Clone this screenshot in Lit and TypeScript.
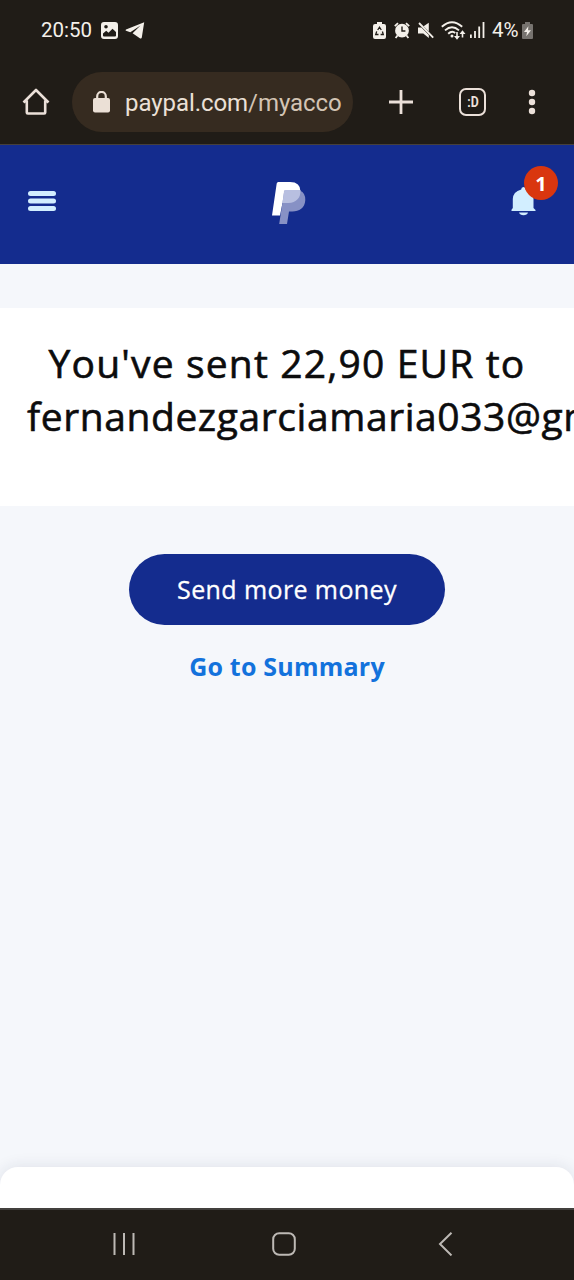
import { LitElement, html, css } from "lit";
import { customElement } from "lit/decorators.js";

@customElement("status-bar")
class StatusBar extends LitElement {
  static styles = css`
    :host { display: flex; align-items: center; height: 60px; box-sizing: border-box; padding: 0 41px 0 41px; font: 20.5px/24px Roboto, sans-serif; color: #f4f0ea; fill: #f4f0ea; }
    svg { display: block; flex: none; }
    .time { width: 60px; white-space: nowrap; }
    .image { margin-right: 7px; }
    .right { display: flex; align-items: center; margin-left: auto; }
    .recycle { margin-right: 8px; }
    .alarm { margin-right: 8px; }
    .mute { margin-right: 7px; }
    .wifi { margin-right: 4px; }
    .signal { margin-right: 7px; }
    .level { width: 30px; white-space: nowrap; }
  `;
  render() {
    return html`
      <span class="time">20:50</span>
      <svg class="image" width="17" height="17" viewBox="0 0 17 17"><path fill-rule="evenodd" d="M3 0H14Q17 0 17 3V14Q17 17 14 17H3Q0 17 0 14V3Q0 0 3 0ZM5 3A1.8 1.8 0 1 0 5 6.6A1.8 1.8 0 1 0 5 3ZM2 13.5V11.5L5.2 8.8L7.5 10.8L11.5 6.8L15 10V13.5Q15 14.5 14 14.5H3Q2 14.5 2 13.5Z"/></svg>
      <svg width="20" height="17" viewBox="0 0 20 17"><path d="M19.2 .3L1 7.5Q0 8.2 1 8.8L5.3 10.2L15.5 3.6L7.6 11.2L15.2 16.4Q16.5 17 16.8 15.5Z"/></svg>
      <div class="right">
        <svg class="recycle" width="13" height="17" viewBox="0 0 13 17"><path d="M4 0H9V2H11Q13 2 13 4V15Q13 17 11 17H2Q0 17 0 15V4Q0 2 2 2H4Z"/><path d="M4.7 8L6.5 5.2L8.3 8M9.4 9.5L10.3 12.5H7.6M5.5 12.5H2.7L3.7 9.4" fill="none" stroke="#201c17" stroke-width="1.3"/></svg>
        <svg class="alarm" width="16" height="17" viewBox="0 0 16 17"><circle cx="8" cy="8.7" r="6.9"/><path d="M.8 4.2L4 1.2M12 1.2L15.2 4.2M3.5 13.5L1.6 16M12.5 13.5L14.4 16" stroke="#f4f0ea" stroke-width="1.8"/><path d="M8 4.5V9H11.4" fill="none" stroke="#201c17" stroke-width="1.4"/></svg>
        <svg class="mute" width="16" height="17" viewBox="0 0 16 17"><path d="M0 5.5H3.4L10.8 12.9V16L5.3 11.5H0ZM5.6 4.3L10.8 .8V9.6Z"/><path d="M1 1L15.2 15.6" stroke="#f4f0ea" stroke-width="1.8"/></svg>
        <svg class="wifi" width="25" height="19" viewBox="0 0 25 19"><g fill="none" stroke="#f4f0ea" stroke-width="1.9"><path d="M.8 5.8Q11 -3.2 21.2 5.8"/><path d="M4 9.4Q11 3.2 18 9.4"/><path d="M7.2 12.8Q11 9.2 14.2 12"/></g><circle cx="11" cy="15" r="1.5"/><path d="M15.2 11H16.8V15H19L16 18.8L13 15H15.2ZM20.7 16.5V13H18.5L21.5 9.3L24.5 13H22.3V16.5Z"/></svg>
        <svg class="signal" width="15" height="16" viewBox="0 0 15 16"><path d="M0 12.5H1.8V16H0ZM4.1 9H5.9V16H4.1ZM8.3 4.5H10.1V16H8.3ZM12.6 0H14.4V16H12.6Z"/></svg>
        <span class="level">4%</span>
        <svg width="11" height="17" viewBox="0 0 11 17"><path fill="#77736f" d="M3 0H8V2H10Q11 2 11 3V16Q11 17 10 17H1Q0 17 0 16V3Q0 2 1 2H3Z"/><path d="M6.4 4.2L2 10H5L4.3 14.2L9 8.3H6Z"/></svg>
      </div>
    `;
  }
}

@customElement("address-bar")
class AddressBar extends LitElement {
  static styles = css`
    :host { display: flex; align-items: center; height: 85px; box-sizing: border-box; padding: 0 38px 1px 22px; border-bottom: 1px solid #46403c; }
    svg { display: block; flex: none; }
    .home { margin-right: 22px; }
    .pill { display: flex; align-items: center; width: 281px; height: 60px; box-sizing: border-box; border-radius: 30px; padding-left: 21px; background: #362b20; color: #ebe0d6; font: 24px/30px Roboto, sans-serif; }
    .url { margin-left: 15px; padding-top: 2px; white-space: nowrap; letter-spacing: -0.06px; }
    .path { color: #d3c4b4; }
    .plus { margin-left: 36px; }
    .tabs { display: flex; align-items: center; justify-content: center; width: 27px; height: 28px; box-sizing: border-box; margin-left: 46px; border: 2.6px solid #ebe0d9; border-radius: 7px; color: #ebe0d9; font: 700 15px/16px Roboto, sans-serif; }
    .face { transform: scaleX(0.82); }
    .dots { margin-left: auto; }
  `;
  render() {
    return html`
      <svg class="home" width="28" height="28" viewBox="0 0 28 28"><path d="M1.5 14.5L14 2L26.5 14.5M4.8 12.5V24.5Q4.8 25.5 5.8 25.5H22.2Q23.2 25.5 23.2 24.5V12.5" fill="none" stroke="#ebe0d9" stroke-width="2.6" stroke-linejoin="round"/></svg>
      <div class="pill">
        <svg width="17" height="22" viewBox="0 0 17 22"><rect y="7" width="17" height="14.5" rx="2" fill="#ebe0d6"/><path d="M4.2 8V5.2A4.3 4.3 0 0 1 12.8 5.2V8" fill="none" stroke="#ebe0d6" stroke-width="2.2"/></svg>
        <span class="url">paypal.com<span class="path">/myacco</span></span>
      </div>
      <svg class="plus" width="24" height="24" viewBox="0 0 24 24"><path d="M12 0V24M0 12H24" stroke="#ebe0d9" stroke-width="2.8"/></svg>
      <div class="tabs"><span class="face">:D</span></div>
      <svg class="dots" width="8" height="26" viewBox="0 0 8 26" fill="#ebe0d9"><circle cx="4" cy="4" r="3.2"/><circle cx="4" cy="13" r="3.2"/><circle cx="4" cy="22" r="3.2"/></svg>
    `;
  }
}

@customElement("site-header")
class SiteHeader extends LitElement {
  static styles = css`
    :host { display: flex; align-items: center; justify-content: space-between; height: 119px; box-sizing: border-box; padding: 0 38px 7px 28px; background: #142c8e; }
    svg { display: block; }
    .logo { margin: 4px 0 0 10px; }
    .bell { position: relative; }
    .badge { position: absolute; left: 13px; top: -21px; width: 34px; height: 34px; border-radius: 50%; background: #d9360f; color: #fff; text-align: center; font: 700 20px/35px "Open Sans", sans-serif; }
  `;
  render() {
    return html`
      <svg width="28" height="20" viewBox="0 0 28 20" fill="#d2eeff"><rect width="28" height="5" rx="2.5"/><rect y="7.5" width="28" height="5" rx="2.5"/><rect y="15" width="28" height="5" rx="2.5"/></svg>
      <svg class="logo" width="34" height="43" viewBox="0 0 34 43"><path fill="#fff" d="M6.3 0H18Q28.5 0 28.5 9.5C28.3 17 23 21 16 21H10.5L8 33.5H0L4.7 1.5Q5 0 6.3 0Z"/><path fill="#8791c5" d="M12.3 8.5H28Q33.5 11 33.3 18C33 26 27 29.5 20.5 29.5H17L15 42H7.2Z"/><path fill="#b8bfe0" d="M14 8H28.3C29.3 15.5 24 21 16.5 21H10.5L12 9.5Q12.2 8 14 8Z"/></svg>
      <div class="bell">
        <svg width="25" height="29" viewBox="0 0 25 29" fill="#d2eeff"><path d="M12.5 0A2.4 2.4 0 0 1 14.8 2.4Q22.5 4.5 22.5 12V21L24.5 23V24H.5V22.8L1.8 21V12Q2 4.5 10.2 2.4A2.4 2.4 0 0 1 12.5 0ZM8 25.6H17Q16.2 28.2 12.5 28.2Q9 28.2 8 25.6Z"/></svg>
        <div class="badge">1</div>
      </div>
    `;
  }
}

@customElement("system-nav")
class SystemNav extends LitElement {
  static styles = css`
    :host { display: flex; align-items: center; height: 72px; box-sizing: border-box; border-top: 2px solid #43403d; padding: 0 121px 2px 113px; background: #201c17; }
    svg { display: block; flex: none; fill: none; stroke: #bdb9b5; stroke-width: 2; }
    .home { margin-left: 137px; }
    .back { margin-left: auto; }
  `;
  render() {
    return html`
      <svg width="22" height="24" viewBox="0 0 22 24"><path d="M1.5 1V23M11 1V23M20.5 1V23"/></svg>
      <svg class="home" width="24" height="24" viewBox="0 0 24 24"><rect x="1.2" y="1.2" width="21.6" height="21.6" rx="6"/></svg>
      <svg class="back" width="15" height="24" viewBox="0 0 15 24"><path d="M13.5 .8L2 12L13.5 23.4"/></svg>
    `;
  }
}

@customElement("app-root")
class AppRoot extends LitElement {
  static styles = css`
    :host { display: flex; flex-direction: column; width: 574px; height: 1280px; overflow: hidden; background: #f5f7fb; font-family: "Open Sans", sans-serif; }
    .chrome { background: #201c17; }
    .card { height: 198px; box-sizing: border-box; margin-top: 44px; padding: 28px 27px 0; background: #fff; }
    h1 { margin: 0; color: #0c0c0d; font-size: 39px; font-weight: 400; line-height: 53px; white-space: nowrap; -webkit-text-stroke: 0.6px #0c0c0d; }
    .sent { display: block; text-align: center; letter-spacing: 1.17px; }
    .email { display: block; letter-spacing: 0.58px; }
    .actions { display: flex; flex-direction: column; align-items: center; flex: 1; padding-top: 48px; }
    button { width: 316px; height: 71px; border: 0; border-radius: 36px; padding: 0 0 2px; background: #142c8e; color: #fff; font: 25px/34px "Open Sans", sans-serif; letter-spacing: 0.4px; -webkit-text-stroke: 0.3px #fff; }
    a { margin-top: 24px; color: #1372dc; font-size: 25px; font-weight: 700; line-height: 34px; letter-spacing: 0.22px; white-space: nowrap; }
    .sheet { height: 41px; border-radius: 18px 18px 0 0; background: #fff; box-shadow: 0 0 16px #1c27451c; }
    system-nav { position: relative; }
  `;
  render() {
    return html`
      <div class="chrome"><status-bar></status-bar><address-bar></address-bar></div>
      <site-header></site-header>
      <section class="card"><h1><span class="sent">You've sent 22,90 EUR to</span><span class="email">fernandezgarciamaria033@gmail.com</span></h1></section>
      <main class="actions"><button>Send more money</button><a>Go to Summary</a></main>
      <div class="sheet"></div>
      <system-nav></system-nav>
    `;
  }
}
